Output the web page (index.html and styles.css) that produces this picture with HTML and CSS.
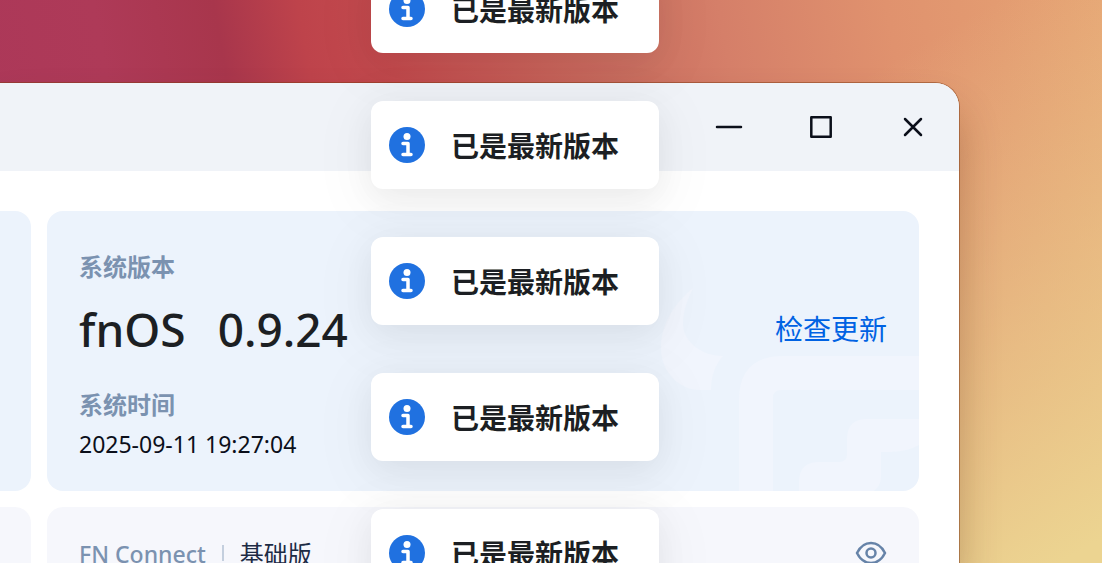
FILE: index.html
```html
<!DOCTYPE html>
<html lang="zh-CN">
<head>
  <meta charset="UTF-8" />
  <meta name="viewport" content="width=device-width, initial-scale=1.0"/>
  <title>fnOS 系统设置</title>
  <link rel="stylesheet" href="styles.css">
</head>
<body>

  <main class="window">
    <header class="titlebar">
      <button type="button" class="win-btn" aria-label="最小化">
        <svg viewBox="0 0 44 44" width="44" height="44"><path d="M10 22H34"/></svg>
      </button>
      <button type="button" class="win-btn" aria-label="最大化">
        <svg viewBox="0 0 44 44" width="44" height="44"><path d="M12.300 12.300H31.700V31.700H12.300Z"/></svg>
      </button>
      <button type="button" class="win-btn" aria-label="关闭">
        <svg viewBox="0 0 44 44" width="44" height="44"><path d="M14 14L30 30M30 14L14 30"/></svg>
      </button>
    </header>

    <div class="content">
      <div class="card side-card"></div>
      <section class="card version-card">
        <svg class="watermark" viewBox="0 0 260 210" width="260" height="210" aria-hidden="true">
          <path d="M34 7C16 22 2 42 2 67C2 91 20 109 41 109H52C52 95 56 84 64 75C42 75 24 60 24 43C24 30 28 20 34 7Z"/>
          <path d="M80 210V119Q80 75 124 75H260V109H122Q114 109 114 117V210Z"/>
          <path d="M140 210V201Q140 181 160 181H180Q188 181 188 173V158Q188 138 208 138H260V164Q248 171 230 171H222V196Q222 204 215 210Z"/>
        </svg>
        <h2 class="label">系统版本</h2>
        <div class="version-row">
          <div class="version"><span>fnOS</span><span>0.9.24</span></div>
          <a class="update-link" href="#">检查更新</a>
        </div>
        <h2 class="label">系统时间</h2>
        <time class="time" datetime="2025-09-11T19:27:04">2025-09-11 19:27:04</time>
      </section>

      <div class="card plain side-card"></div>
      <section class="card plain connect-card">
        <h2 class="label">FN Connect</h2>
        <span class="divider"></span>
        <span class="plan">基础版</span>
        <button type="button" class="eye-btn" aria-label="显示">
          <svg viewBox="0 0 32 24" width="32" height="24">
            <path d="M2 12C5 6 10 2 16 2S27 6 30 12C27 18 22 22 16 22S5 18 2 12Z"/>
            <circle cx="16" cy="12" r="4.500"/>
          </svg>
        </button>
      </section>
    </div>
  </main>

  <svg width="0" height="0" class="defs" aria-hidden="true">
    <symbol id="info" viewBox="0 0 36 36">
      <circle cx="18" cy="18" r="18" fill="#2071e0"/>
      <circle cx="18" cy="9.500" r="3.500" fill="#fff"/>
      <path d="M14 16.500H19V27M14 27.500H22" fill="none" stroke="#fff" stroke-width="3.500" stroke-linecap="round" stroke-linejoin="round"/>
    </symbol>
  </svg>

  <div class="toasts" role="status">
    <div class="toast"><svg width="36" height="36"><use href="#info"/></svg>已是最新版本</div>
    <div class="toast"><svg width="36" height="36"><use href="#info"/></svg>已是最新版本</div>
    <div class="toast"><svg width="36" height="36"><use href="#info"/></svg>已是最新版本</div>
    <div class="toast"><svg width="36" height="36"><use href="#info"/></svg>已是最新版本</div>
    <div class="toast"><svg width="36" height="36"><use href="#info"/></svg>已是最新版本</div>
  </div>

</body>
</html>
```
FILE: styles.css
```css
* {
  box-sizing: border-box;
}
body {
  margin: 0;
  height: 100vh;
  overflow: hidden;
  display: flex;
  padding: 83px 143px 0 0;
  font-family: "Noto Sans", "Noto Sans CJK SC", sans-serif;
  color: #1c1f23;
  background:
    linear-gradient(150deg, rgba(236, 212, 145, 0) 48%, #ecd491 98%),
    linear-gradient(80deg, #ab3759 0%, #ae3a58 16%, #a8364c 26%, #be434b 33%, #c44b4e 40%, #cb6d60 58%, #d57f69 68%, #e0926e 82%, #e6a474 100%);
}
h2 {
  margin: 0;
}
button {
  border: 0;
  padding: 0;
  background: none;
}

/* window */
.window {
  flex: 1;
  display: flex;
  flex-direction: column;
  background: #fff;
  border-radius: 0 24px 0 0;
  box-shadow: 0 0 0 1px rgba(130, 60, 20, 0.5), 0 28px 40px rgba(90, 40, 10, 0.3);
}
.titlebar {
  flex: none;
  height: 88px;
  display: flex;
  justify-content: flex-end;
  align-items: center;
  gap: 48px;
  padding-right: 24px;
  background: #f0f3f8;
  border-radius: 0 24px 0 0;
}
.win-btn {
  width: 44px;
  height: 44px;
}
.win-btn svg, .eye-btn svg {
  display: block;
  fill: none;
}
.win-btn path {
  stroke: #0b0f1a;
  stroke-width: 2.5;
  stroke-linecap: round;
  stroke-linejoin: round;
}
.content {
  flex: 1;
  min-height: 0;
  display: grid;
  grid-template-columns: 31px 1fr;
  grid-auto-rows: 280px;
  gap: 16px;
  padding: 40px 40px 0 0;
  overflow: hidden;
}

/* cards */
.card {
  background: #ecf3fc;
  border-radius: 16px;
  padding: 40px 32px;
}
.card.plain {
  background: #f6f7fc;
}
.side-card {
  padding: 0;
  border-radius: 0 16px 16px 0;
}
.label {
  font-size: 24px;
  line-height: 32px;
  font-weight: 700;
  color: #7b92b0;
}
.version-card {
  position: relative;
  overflow: hidden;
}
.watermark {
  position: absolute;
  right: 0;
  bottom: 0;
  fill: #f1f5fd;
}
.version-row {
  position: relative;
  display: flex;
  justify-content: space-between;
  align-items: center;
  margin: 14px 0 28px;
  height: 64px;
}
.version {
  display: flex;
  gap: 32px;
  font-size: 46px;
  line-height: 64px;
  font-weight: 500;
}
.update-link {
  font-size: 28px;
  line-height: 40px;
  color: #0062e3;
  text-decoration: none;
}
.time {
  display: block;
  margin-top: 5px;
  font-size: 23px;
  line-height: 36px;
  color: #0b0f1a;
}
.connect-card {
  display: flex;
  align-items: flex-start;
  padding-top: 31px;
}
.connect-card .label {
  font-size: 23px;
  font-weight: 500;
}
.divider {
  width: 2px;
  height: 16px;
  margin: 7px 16px;
  background: #c4cfde;
}
.plan {
  font-size: 24px;
  line-height: 32px;
  color: #1d2b45;
}
.eye-btn {
  margin: 3px 0 0 auto;
}
.eye-btn svg {
  stroke: #6683a8;
  stroke-width: 2.5;
}

/* toasts lie over the window */
.toasts {
  position: absolute;
  inset: 0;
  overflow: hidden;
  display: flex;
  flex-direction: column;
  align-items: center;
  gap: 48px;
  padding-right: 72px;
}
.toast {
  flex: none;
  display: flex;
  align-items: center;
  gap: 26px;
  height: 88px;
  padding: 0 40px 0 18px;
  background: #fff;
  border-radius: 12px;
  font-size: 28px;
  font-weight: 700;
  box-shadow: 0 8px 32px rgba(0, 0, 0, 0.06), 0 12px 56px 16px rgba(0, 0, 0, 0.03);
}
.toast:first-child {
  margin-top: -35px;
}
.defs {
  position: absolute;
}
```
